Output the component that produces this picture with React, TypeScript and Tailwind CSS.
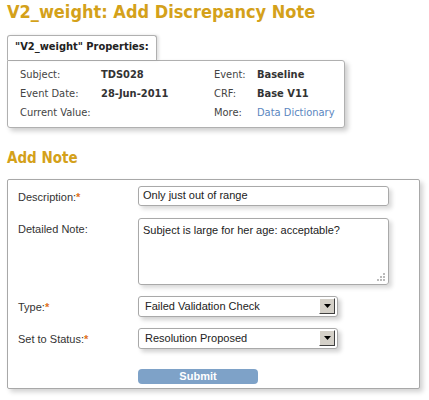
const Label = ({ text, required }: { text: string; required?: boolean }) => (
  <div className="w-[120px] shrink-0 pt-[3px] text-[11px] text-[#333]">
    {text}
    {required && <span className="text-[#e0701c] font-bold">*</span>}
  </div>
);

const SelectBox = ({ value }: { value: string }) => (
  <div className="flex h-[21px] w-[200px] items-center justify-between rounded-[3px] border border-[#a9a9a9] bg-white pl-[6px] pr-[2px] text-[11px] text-[#222] shadow-[3px_3px_4px_rgba(0,0,0,0.18)]">
    <span>{value}</span>
    <span className="flex h-[16px] w-[16px] items-center justify-center border border-t-white border-l-white border-r-[#404040] border-b-[#404040] bg-[#d4d0c8]">
      <svg width="7" height="4" viewBox="0 0 7 4">
        <path d="M0 0h7L3.5 4z" fill="#000" />
      </svg>
    </span>
  </div>
);

export default function App() {
  return (
    <div className="h-[400px] w-[429px] bg-white pl-[7px] pt-[1px] font-['DejaVu_Sans_Condensed','DejaVu_Sans',sans-serif]">
      <h1 className="text-[18px] font-bold leading-[22px] text-[#d4a11a]">
        V2_weight: Add Discrepancy Note
      </h1>

      <div className="mt-[10px]">
        <div className="inline-block rounded-t-[3px] border border-b-0 border-[#b0b0b0] bg-white px-[7px] pb-[4px] pt-[3px] text-[11px] font-bold text-[#222] shadow-[2px_0_3px_rgba(0,0,0,0.12)]">
          "V2_weight" Properties:
        </div>
        <div className="w-[338px] rounded-b-[3px] rounded-tr-[3px] border border-[#b0b0b0] bg-white px-[12px] pb-[7px] pt-[6px] text-[11px] text-[#444] shadow-[3px_3px_5px_rgba(0,0,0,0.2)]">
          <div className="grid grid-cols-[81px_113px_43px_1fr] gap-y-[4px] whitespace-nowrap leading-[15px]">
            <span>Subject:</span>
            <span className="font-bold text-[#333]">TDS028</span>
            <span>Event:</span>
            <span className="font-bold text-[#333]">Baseline</span>
            <span>Event Date:</span>
            <span className="font-bold text-[#333]">28-Jun-2011</span>
            <span>CRF:</span>
            <span className="font-bold text-[#333]">Base V11</span>
            <span>Current Value:</span>
            <span></span>
            <span>More:</span>
            <span className="text-[#5a86c0]">Data Dictionary</span>
          </div>
        </div>
      </div>

      <h2 className="mt-[21px] text-[15px] font-bold leading-[18px] text-[#d4a11a]">Add Note</h2>

      <div className="mt-[12px] w-[413px] rounded-[2px] border border-[#a8a8a8] bg-white pb-[4px] pl-[10px] pt-[6px] font-['Liberation_Sans',Arial,sans-serif] shadow-[3px_3px_5px_rgba(0,0,0,0.18)]">
        <div className="flex">
          <Label text="Description:" required />
          <div className="flex h-[20px] w-[251px] items-center rounded-[3px] border border-[#a9a9a9] pl-[4px] text-[11px] text-[#222] shadow-[3px_3px_4px_rgba(0,0,0,0.15)]">
            Only just out of range
          </div>
        </div>
        <div className="mt-[12px] flex">
          <Label text="Detailed Note:" />
          <div className="relative h-[67px] w-[251px] rounded-[3px] border border-[#a9a9a9] pl-[4px] pt-[3px] text-[11px] text-[#222] shadow-[3px_3px_4px_rgba(0,0,0,0.15)]">
            Subject is large for her age: acceptable?
            <svg className="absolute bottom-[2px] right-[2px]" width="9" height="9" viewBox="0 0 9 9">
              <rect x="6" y="0" width="2" height="2" fill="#bbb" />
              <rect x="3" y="3" width="2" height="2" fill="#bbb" />
              <rect x="6" y="3" width="2" height="2" fill="#bbb" />
              <rect x="0" y="6" width="2" height="2" fill="#bbb" />
              <rect x="3" y="6" width="2" height="2" fill="#bbb" />
              <rect x="6" y="6" width="2" height="2" fill="#bbb" />
            </svg>
          </div>
        </div>
        <div className="mt-[11px] flex">
          <Label text="Type:" required />
          <SelectBox value="Failed Validation Check" />
        </div>
        <div className="mt-[11px] flex">
          <Label text="Set to Status:" required />
          <SelectBox value="Resolution Proposed" />
        </div>
        <div className="mt-[20px] flex">
          <div className="w-[120px] shrink-0" />
          <button className="h-[15px] w-[120px] rounded-[4px] bg-[#7ea2c8] text-[11px] font-bold leading-[15px] text-white">
            Submit
          </button>
        </div>
      </div>
    </div>
  );
}
